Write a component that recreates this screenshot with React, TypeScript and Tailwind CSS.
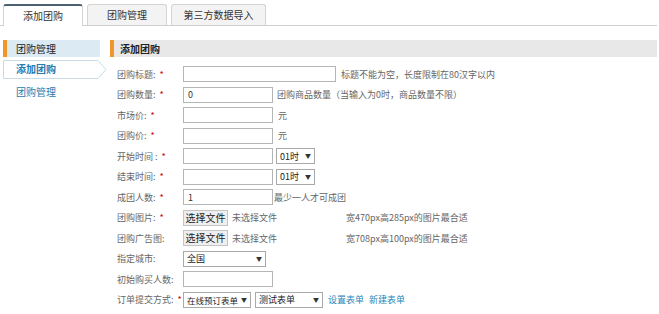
import React from "react";

const font = { fontFamily: '"Noto Sans CJK SC", "Noto Sans", sans-serif' };

function Star() {
  return <span className="text-[#cc0000] ml-[4px]">*</span>;
}

function Label({ text, req }: { text: string; req?: boolean }) {
  return (
    <div className="w-[66px] shrink-0 text-[#666] flex items-center whitespace-nowrap">
      <span>{text}</span>
      {req && <Star />}
    </div>
  );
}

function Input({ w, value }: { w: string; value?: string }) {
  return (
    <div className={`${w} h-[16px] shrink-0 border border-[#b5b5b5] bg-white text-[#333] pl-[4px] flex items-center whitespace-nowrap`}>
      {value}
    </div>
  );
}

function Select({ w, value, small }: { w: string; value: string; small?: boolean }) {
  return (
    <div className={`${w} h-[16px] shrink-0 border border-[#a9a9a9] bg-white text-[#222] pl-[3px] pr-[3px] flex items-center justify-between whitespace-nowrap`}>
      <span className={small ? "text-[8.5px]" : ""}>{value}</span>
      <span className="text-[6px] text-[#333]">▼</span>
    </div>
  );
}

function FileBtn() {
  return (
    <div className="flex items-center whitespace-nowrap">
      <div className="h-[16px] w-[45px] border border-[#c4c4c4] bg-[#efefef] text-[#222] flex items-center justify-center text-[10px]">选择文件</div>
      <span className="ml-[4px] text-[#666]">未选择文件</span>
    </div>
  );
}

function Row({ children }: { children: React.ReactNode }) {
  return <div className="h-[20.5px] flex items-center whitespace-nowrap">{children}</div>;
}

export default function App() {
  return (
    <div className="w-[659px] h-[314px] bg-white text-[9px] leading-none overflow-hidden relative" style={font}>
      {/* Tabs */}
      <div className="h-[26px] pt-[4px] pl-[3px] flex items-end gap-[4px] border-b border-[#cfcfcf] w-[657px]">
        <div className="w-[80px] h-[22px] -mb-[1px] bg-white border border-[#d4d4d4] border-t-[2px] border-t-[#4c6272] border-b-0 rounded-t-[3px] flex items-center justify-center text-[10px] text-[#333]">添加团购</div>
        <div className="w-[80px] h-[21px] bg-[#f3f3f3] border border-[#d4d4d4] border-b-0 rounded-t-[3px] flex items-center justify-center text-[10px] text-[#333]">团购管理</div>
        <div className="w-[95px] h-[21px] bg-[#f3f3f3] border border-[#d4d4d4] border-b-0 rounded-t-[3px] flex items-center justify-center text-[10px] text-[#333]">第三方数据导入</div>
      </div>

      <div className="flex pt-[14px]">
        {/* Sidebar */}
        <div className="w-[110px] pl-[3px] shrink-0">
          <div className="w-[97px] h-[17px] bg-[#dceaf3] flex items-center">
            <div className="w-[4px] h-full bg-[#f0962a]" />
            <span className="ml-[9px] text-[10px] text-[#222]">团购管理</span>
          </div>
          <div className="relative mt-[3px] h-[19px] w-[104px]">
            <svg className="absolute left-0 top-0" width="104" height="19" viewBox="0 0 104 19">
              <path d="M0.5 0.5 H95 L103 9.5 L95 18.5 H0.5 Z" fill="#ffffff" stroke="#c9dbe6" />
            </svg>
            <span className="absolute left-[13px] top-[4px] text-[10px] font-bold text-[#2a7ab0]">添加团购</span>
          </div>
          <div className="mt-[8px] pl-[13px] text-[10px] text-[#2a7ab0]">团购管理</div>
        </div>

        {/* Main */}
        <div className="flex-1 pr-[2px]">
          <div className="h-[17px] bg-[#e8e8e8] flex items-center">
            <div className="w-[4px] h-full bg-[#f0962a]" />
            <span className="ml-[6px] text-[10px] font-bold text-[#222]">添加团购</span>
          </div>
          <div className="pl-[7px] pt-[7px] flex flex-col">
            <Row>
              <Label text="团购标题:" req />
              <Input w="w-[153px]" />
              <span className="ml-[5px] text-[#666]">标题不能为空，长度限制在80汉字以内</span>
            </Row>
            <Row>
              <Label text="团购数量:" req />
              <Input w="w-[90px]" value="0" />
              <span className="ml-[4px] text-[#666]">团购商品数量（当输入为0时，商品数量不限）</span>
            </Row>
            <Row>
              <Label text="市场价:" req />
              <Input w="w-[90px]" />
              <span className="ml-[5px] text-[#666]">元</span>
            </Row>
            <Row>
              <Label text="团购价:" req />
              <Input w="w-[90px]" />
              <span className="ml-[5px] text-[#666]">元</span>
            </Row>
            <Row>
              <Label text="开始时间 :" req />
              <Input w="w-[90px]" />
              <div className="ml-[3px]"><Select w="w-[39px]" value="01时" /></div>
            </Row>
            <Row>
              <Label text="结束时间:" req />
              <Input w="w-[90px]" />
              <div className="ml-[3px]"><Select w="w-[39px]" value="01时" /></div>
            </Row>
            <Row>
              <Label text="成团人数:" req />
              <Input w="w-[90px]" value="1" />
              <span className="ml-[1px] text-[#666]">最少一人才可成团</span>
            </Row>
            <Row>
              <Label text="团购图片:" req />
              <FileBtn />
              <span className="ml-[69px] text-[#666]">宽470px高285px的图片最合适</span>
            </Row>
            <Row>
              <Label text="团购广告图:" />
              <FileBtn />
              <span className="ml-[69px] text-[#666]">宽708px高100px的图片最合适</span>
            </Row>
            <Row>
              <Label text="指定城市:" />
              <Select w="w-[83px]" value="全国" />
            </Row>
            <Row>
              <Label text="初始购买人数:" />
              <Input w="w-[90px]" />
            </Row>
            <Row>
              <Label text="订单提交方式:" req />
              <Select w="w-[68px]" value="在线预订表单" small />
              <div className="ml-[4px]"><Select w="w-[68px]" value="测试表单" /></div>
              <span className="ml-[5px] text-[#2a88b8]">设置表单</span>
              <span className="ml-[5px] text-[#2a88b8]">新建表单</span>
            </Row>
          </div>
        </div>
      </div>
    </div>
  );
}
